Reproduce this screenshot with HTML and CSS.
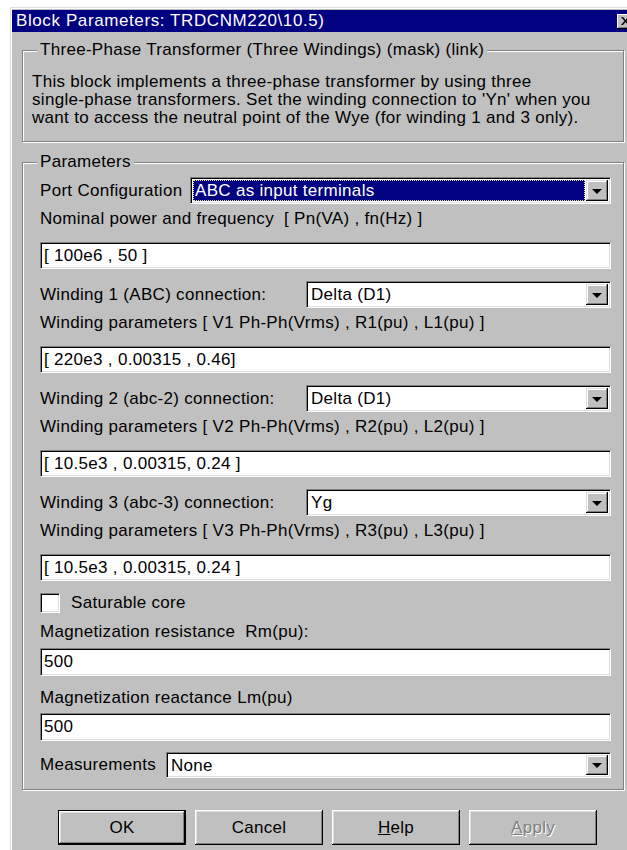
FILE: index.html
```html
<!DOCTYPE html>
<html lang="en">
<head>
<meta charset="utf-8">
<title>Block Parameters</title>
<link rel="stylesheet" href="styles.css">
</head>
<body>
<div class="window">
  <div class="titlebar">
    <span class="title">Block Parameters: TRDCNM220\10.5)</span>
    <span class="close">
      <svg width="9" height="8" viewBox="0 0 9 8" aria-hidden="true">
        <path d="M0 0h2l2.5 3 2.5-3h2L5.5 4 9 8H7L4.5 5 2 8H0l3.5-4z" fill="#000"/>
      </svg>
    </span>
  </div>

  <fieldset class="group group-desc">
    <legend>Three-Phase Transformer (Three Windings) (mask) (link)</legend>
    <p class="desc">This block implements a three-phase transformer by using three<br>single-phase transformers. Set the winding connection to 'Yn' when you<br>want to access the neutral point of the Wye (for winding 1 and 3 only).</p>
  </fieldset>

  <fieldset class="group group-params">
    <legend>Parameters</legend>

    <div class="combo-row row-port">
      <span class="lbl">Port Configuration</span>
      <div class="combo">
        <span class="combo-value selected">ABC as input terminals</span>
        <span class="combo-btn"></span>
      </div>
    </div>
    <div class="caption">Nominal power and frequency&nbsp; [ Pn(VA) , fn(Hz) ]</div>
    <div class="field">[ 100e6 , 50 ]</div>

    <div class="combo-row row-winding">
      <span class="lbl">Winding 1 (ABC) connection:</span>
      <div class="combo">
        <span class="combo-value">Delta (D1)</span>
        <span class="combo-btn"></span>
      </div>
    </div>
    <div class="caption">Winding parameters [ V1 Ph-Ph(Vrms) , R1(pu) , L1(pu) ]</div>
    <div class="field">[ 220e3 , 0.00315 , 0.46]</div>

    <div class="combo-row row-winding">
      <span class="lbl">Winding 2 (abc-2) connection:</span>
      <div class="combo">
        <span class="combo-value">Delta (D1)</span>
        <span class="combo-btn"></span>
      </div>
    </div>
    <div class="caption">Winding parameters [ V2 Ph-Ph(Vrms) , R2(pu) , L2(pu) ]</div>
    <div class="field">[ 10.5e3 , 0.00315, 0.24 ]</div>

    <div class="combo-row row-winding">
      <span class="lbl">Winding 3 (abc-3) connection:</span>
      <div class="combo">
        <span class="combo-value">Yg</span>
        <span class="combo-btn"></span>
      </div>
    </div>
    <div class="caption">Winding parameters [ V3 Ph-Ph(Vrms) , R3(pu) , L3(pu) ]</div>
    <div class="field">[ 10.5e3 , 0.00315, 0.24 ]</div>

    <div class="check-row">
      <span class="check"></span>
      <span class="check-label">Saturable core</span>
    </div>

    <div class="caption caption-mag-r">Magnetization resistance&nbsp; Rm(pu):</div>
    <div class="field field-tall">500</div>
    <div class="caption caption-mag-l">Magnetization reactance Lm(pu)</div>
    <div class="field field-tall">500</div>

    <div class="combo-row row-meas">
      <span class="lbl">Measurements</span>
      <div class="combo combo-short">
        <span class="combo-value">None</span>
        <span class="combo-btn"></span>
      </div>
    </div>
  </fieldset>

  <div class="buttons">
    <span class="btn btn-default">OK</span>
    <span class="btn">Cancel</span>
    <span class="btn"><u>H</u>elp</span>
    <span class="btn btn-disabled"><u>A</u>pply</span>
  </div>
</div>
</body>
</html>
```

FILE: styles.css
```css
html,
body {
  margin: 0;
  background: #fff;
  overflow: hidden;
}

body {
  font-family: "Liberation Sans", Arial, sans-serif;
  font-size: 17px;
  letter-spacing: 0.3px;
  color: #000;
}

/* dialog frame */
.window {
  margin: 7px 0 0 10px;
  width: 630px;
  height: 860px;
  box-sizing: border-box;
  background: #c0c0c0;
  border-top: 1px solid #dfdfdf;
  border-left: 1px solid #dfdfdf;
  box-shadow: inset 1px 1px #fff;
  padding: 2px 0 0 1px;
}

.titlebar {
  height: 22px;
  background: #000080;
  color: #fff;
  display: flex;
  align-items: center;
  justify-content: space-between;
  padding-left: 4px;
}

.title {
  line-height: 22px;
  letter-spacing: 0.6px;
}

.close {
  width: 17px;
  height: 15px;
  margin-right: 6px;
  background: #c0c0c0;
  box-shadow: inset -1px -1px #000, inset 1px 1px #fff, inset -2px -2px #808080;
  display: flex;
  align-items: center;
  justify-content: center;
}

/* etched group boxes */
.group {
  margin: 0 0 0 10px;
  width: 602px;
  box-sizing: border-box;
  min-inline-size: 0;
  border: 1px solid #808080;
  box-shadow: inset 1px 1px #fff, 1px 1px #fff;
}

.group legend {
  padding: 0 3px;
  line-height: 20px;
  background: #c0c0c0;
}

.group-desc {
  margin-top: 8px;
  padding: 13px 9px 14px 9px;
}

.group-desc legend {
  margin-left: 5px;
}

.desc {
  margin: 0;
  line-height: 18px;
}

.group-params {
  margin-top: 10px;
  padding: 5px 12px 11px 17px;
}

.group-params legend {
  margin-left: -3px;
}

/* label + drop-down rows */
.combo-row {
  display: grid;
  align-items: center;
  height: 27px;
  margin-top: 12px;
}

.row-port {
  grid-template-columns: 150px 1fr;
  margin-top: 0;
}

.row-winding {
  grid-template-columns: 266px 1fr;
}

.row-meas {
  grid-template-columns: 126px 1fr;
  height: 26px;
  margin-top: 11px;
}

.lbl {
  line-height: 20px;
  white-space: nowrap;
}

.combo {
  display: flex;
  height: 27px;
  box-sizing: border-box;
  background: #fff;
  border: 1px solid;
  border-color: #808080 #fff #fff #808080;
  box-shadow: inset 1px 1px #000, inset -1px -1px #dfdfdf;
  padding: 2px;
}

.combo-short {
  height: 26px;
}

.combo-value {
  flex: 1;
  padding-left: 2px;
  line-height: 21px;
  white-space: nowrap;
}

.combo-value.selected {
  background: #000080;
  color: #fff;
  outline: 1px dotted #e8e890;
  outline-offset: -1px;
  margin-right: 1px;
}

.combo-btn {
  width: 22px;
  background: #c0c0c0;
  box-shadow: inset -1px -1px #000, inset 1px 1px #dfdfdf, inset -2px -2px #808080, inset 2px 2px #fff;
  display: flex;
  align-items: center;
  justify-content: center;
}

.combo-btn::after {
  content: "";
  border-left: 5px solid transparent;
  border-right: 5px solid transparent;
  border-top: 5px solid #000;
  margin-top: 1px;
}

/* captions and edit fields */
.caption {
  line-height: 20px;
  margin: 5px 0 13px;
  white-space: nowrap;
}

.caption-mag-r {
  margin: 9px 0 6px;
}

.caption-mag-l {
  margin: 12px 0 5px;
}

.field {
  height: 27px;
  box-sizing: border-box;
  background: #fff;
  border: 1px solid;
  border-color: #808080 #fff #fff #808080;
  box-shadow: inset 1px 1px #000, inset -1px -1px #dfdfdf;
  padding-left: 3px;
  line-height: 25px;
  white-space: nowrap;
}

.field-tall {
  height: 28px;
  line-height: 26px;
}

/* checkbox */
.check-row {
  display: flex;
  align-items: center;
  height: 20px;
  margin-top: 12px;
}

.check {
  width: 20px;
  height: 20px;
  box-sizing: border-box;
  background: #fff;
  border: 1px solid;
  border-color: #808080 #fff #fff #808080;
  box-shadow: inset 1px 1px #000, inset -1px -1px #dfdfdf;
}

.check-label {
  margin-left: 11px;
  line-height: 20px;
}

/* dialog buttons */
.buttons {
  display: flex;
  gap: 9px;
  margin: 20px 0 0 46px;
}

.btn {
  width: 128px;
  height: 35px;
  box-sizing: border-box;
  display: flex;
  align-items: center;
  justify-content: center;
  background: #c0c0c0;
  box-shadow: inset -1px -1px #000, inset 1px 1px #fff, inset -2px -2px #808080, inset 2px 2px #dfdfdf;
}

.btn-default {
  border: 1px solid #000;
}

.btn-disabled {
  color: #808080;
  text-shadow: 1px 1px #fff;
}
```
